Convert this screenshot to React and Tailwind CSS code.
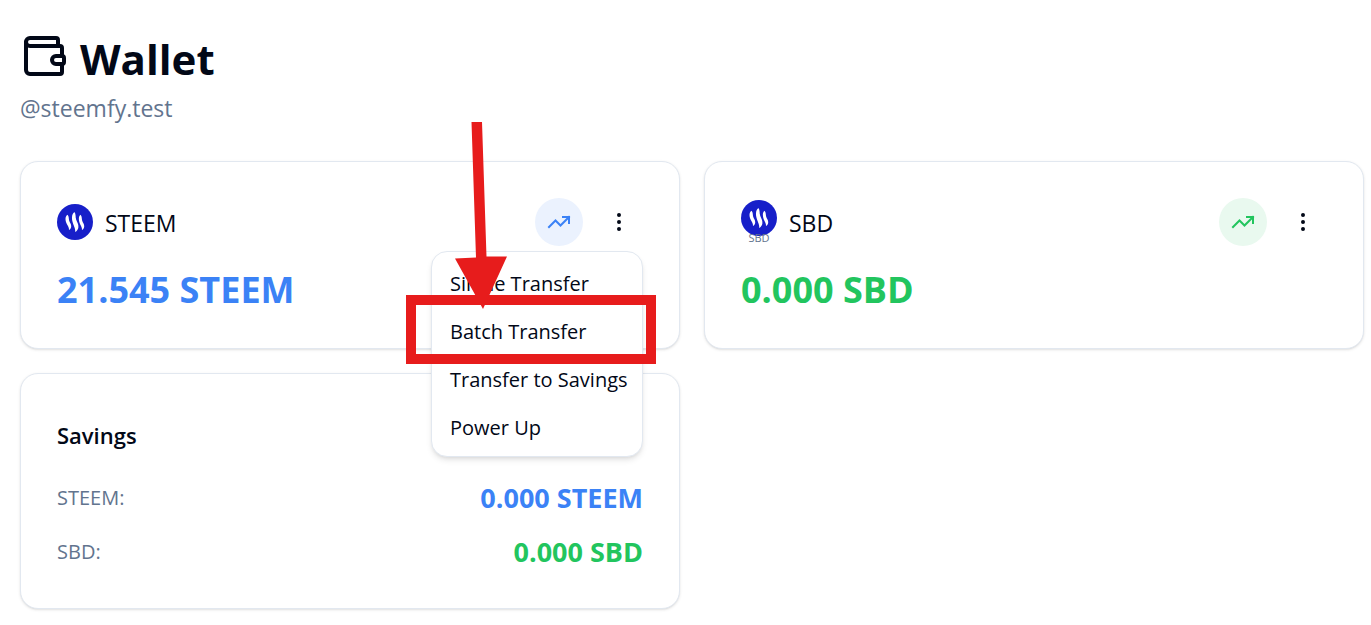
import React from "react";
import { Wallet, TrendingUp, EllipsisVertical } from "lucide-react";

function SteemMark() {
  return (
    <svg viewBox="0 0 36 36" className="block size-9" aria-hidden="true">
      <circle cx="18" cy="18" r="18" fill="#171fc9" />
      <g fill="#fff">
        <path d="M10.600 10.800 C12.200 12.800 11.600 14.600 12.200 16.800 C12.800 19 14.500 20.200 14.200 22.800 C14 24.400 13.200 25.400 12 26 C12.200 23.600 10.800 22 9.700 19.800 C8.600 17.400 8.200 15 8.700 13.200 C9 12.200 9.600 11.400 10.600 10.800 Z" />
        <path d="M17.400 8 C19.200 10.400 18.200 12.800 19.200 15.800 C20 18.200 21.700 20 21.400 23.200 C21.200 25.400 19.900 27 18.200 28 C18.600 25 17.200 22.800 16.200 20 C15.200 17.200 14.600 14.200 15.200 11.600 C15.600 10 16.400 8.800 17.400 8 Z" />
        <path d="M23.600 10.800 C25.200 12.800 24.600 14.600 25.200 16.800 C25.800 19 27.500 20.200 27.200 22.800 C27 24.400 26.200 25.400 25 26 C25.200 23.600 23.800 22 22.900 19.800 C22 17.400 21.600 15 22 13.200 C22.200 12.200 22.700 11.400 23.600 10.800 Z" />
      </g>
    </svg>
  );
}

function AssetCard({ name, mark, balance, balanceClass, badgeClass, children }) {
  return (
    <section className="rounded-[18px] border border-slate-200 bg-white p-9 shadow-sm">
      <div className="flex h-12 items-center justify-between">
        <div className="flex items-center gap-3">
          {mark}
          <h2 className="pt-0.5 text-[23px] leading-9 font-medium">{name}</h2>
        </div>
        <div className="flex items-center gap-3">
          <span className={`flex size-12 items-center justify-center rounded-full ${badgeClass}`}>
            <TrendingUp size={24} strokeLinecap="square" strokeLinejoin="miter" />
          </span>
          <div className="relative">
            <button type="button" aria-label={`${name} actions`} className="flex size-12 items-center justify-center">
              <EllipsisVertical size={24} />
            </button>
            {children}
          </div>
        </div>
      </div>
      <p className={`mt-[23px] mb-px text-[36px] leading-[42px] font-bold ${balanceClass}`}>{balance}</p>
    </section>
  );
}

const actions = ["Single Transfer", "Batch Transfer", "Transfer to Savings", "Power Up"];

function ActionMenu() {
  return (
    <div className="absolute top-full right-0 z-10 mt-[5px] w-53">
      <ul className="rounded-2xl border border-slate-200 bg-white p-1.5 shadow-md">
        {actions.map((label) => (
          <li key={label}>
            <button type="button" className="block h-12 w-full px-3 pt-1 text-left text-[20px] leading-[30px] whitespace-nowrap">
              {label}
            </button>
          </li>
        ))}
      </ul>
      <div className="pointer-events-none absolute top-11 -right-[13px] -left-[25px] h-[69px] border-[10px] border-[#e71c1c]" />
      <svg viewBox="0 0 54 188" className="pointer-events-none absolute -top-[129px] left-6 h-[188px] w-[54px]" aria-hidden="true">
        <path d="M16.500 0 H27 L31.500 134.500 H52 L28 187 L0 136.500 L21 135.500 Z" fill="#e71c1c" />
      </svg>
    </div>
  );
}

function SavingsRow({ label, value, valueClass }) {
  return (
    <div className="flex items-center justify-between">
      <dt className="text-[20px] leading-[30px] text-slate-500">{label}</dt>
      <dd className={`text-[27px] leading-[42px] font-bold ${valueClass}`}>{value}</dd>
    </div>
  );
}

export default function App() {
  return (
    <main className="bg-white pt-8 pr-[7px] pb-4 pl-5 font-['Open_Sans','Noto_Sans',sans-serif] text-[#020817]">
      <header>
        <h1 className="flex h-[54px] items-center gap-3 text-[42px] leading-[54px] font-bold">
          <Wallet size={48} className="-mt-1.5 shrink-0" />
          Wallet
        </h1>
        <p className="mt-1 text-[23px] leading-9 text-slate-500">@steemfy.test</p>
      </header>
      <div className="mt-[35px] grid grid-cols-2 gap-6">
        <AssetCard
          name="STEEM"
          mark={<SteemMark />}
          balance="21.545 STEEM"
          balanceClass="text-[#3b82f6]"
          badgeClass="bg-[#ebf2fe] text-[#3b82f6]"
        >
          <ActionMenu />
        </AssetCard>
        <AssetCard
          name="SBD"
          mark={
            <span className="flex flex-col items-center">
              <SteemMark />
              <span className="-mt-0.5 h-2.5 text-[11px] leading-2 text-slate-500">SBD</span>
            </span>
          }
          balance="0.000 SBD"
          balanceClass="text-[#22c55e]"
          badgeClass="bg-[#e9f9ef] text-[#22c55e]"
        />
        <section className="rounded-[18px] border border-slate-200 bg-white px-9 pt-9 pb-[35px] shadow-sm">
          <h2 className="mt-[7px] text-[22px] leading-9 font-semibold">Savings</h2>
          <dl className="mt-6 flex flex-col gap-3">
            <SavingsRow label="STEEM:" value="0.000 STEEM" valueClass="text-[#3b82f6]" />
            <SavingsRow label="SBD:" value="0.000 SBD" valueClass="text-[#22c55e]" />
          </dl>
        </section>
      </div>
    </main>
  );
}
